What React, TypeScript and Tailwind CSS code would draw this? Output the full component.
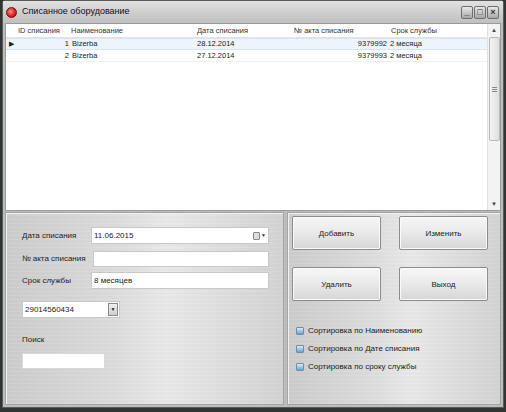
import React from 'react';

const rows = [
  { id: 1, name: 'Bizerba', date: '28.12.2014', act: '9379992', term: '2 месяца' },
  { id: 2, name: 'Bizerba', date: '27.12.2014', act: '9379993', term: '2 месяца' },
];

const metal =
  'bg-[repeating-linear-gradient(0deg,rgba(255,255,255,0.08)_0px,rgba(255,255,255,0.08)_1px,rgba(0,0,0,0.015)_2px,rgba(0,0,0,0)_4px),linear-gradient(90deg,#cbcbcb,#dcdcdc_40%,#e8e8e8_58%,#d2d2d2)]';

function Btn({ label }: { label: string }) {
  return (
    <button className="w-[89px] h-[34px] rounded-[2px] border border-[#8c8c8c] bg-[linear-gradient(180deg,#f7f7f7,#e9e9e9_50%,#d6d6d6)] shadow-[inset_0_0_0_1px_#fafafa] text-[8px] text-[#222] pt-[2px]">
      {label}
    </button>
  );
}

function Check({ label }: { label: string }) {
  return (
    <div className="flex items-center gap-[4px] h-[18px]">
      <span className="w-[8px] h-[8px] rounded-[1px] border border-[#7a8a9a] bg-[linear-gradient(180deg,#d8ecfa,#5fa6d8)]" />
      <span className="text-[8px] text-[#222]">{label}</span>
    </div>
  );
}

export default function App() {
  return (
    <div className="w-[506px] h-[412px] bg-[#2f3530] overflow-hidden font-['Liberation_Sans',sans-serif]">
      <div className="ml-[2px] w-[502px] h-[408px] bg-[#bdbdbd] border border-[#5a5a5a] rounded-t-[4px] flex flex-col">
        {/* title bar */}
        <div className="h-[22px] flex items-center px-[3px] bg-[linear-gradient(180deg,#e2e2e2,#cdcdcd_55%,#c0c0c0)]">
          <span className="w-[11px] h-[11px] rounded-full bg-[radial-gradient(circle_at_40%_40%,#ff8a80,#d32020_60%,#8a0c0c)] border border-[#7a1010]" />
          <span className="ml-[5px] text-[9px] text-[#111]">Списанное оборудование</span>
          <div className="ml-auto flex gap-[1px] mr-[1px]">
            {['_', '□', '×'].map((c) => (
              <span
                key={c}
                className="w-[12px] h-[13px] flex items-center justify-center rounded-[2px] border border-[#6e6e6e] bg-[linear-gradient(180deg,#e8e8e8,#a8a8a8)] text-[9px] leading-none text-[#333] font-bold"
              >
                {c}
              </span>
            ))}
          </div>
        </div>

        {/* grid */}
        <div className="mx-[2px] h-[188px] bg-white border border-[#9a9a9a] flex">
          <div className="flex-1 flex flex-col">
            <div className="h-[14px] flex items-center text-[7.5px] text-[#333] border-b border-[#e4e4e4]">
              <span className="w-[10px]" />
              <span className="w-[53px] pl-[2px]">ID списания</span>
              <span className="w-[126px] pl-[2px]">Наименование</span>
              <span className="w-[97px] pl-[2px]">Дата списания</span>
              <span className="w-[97px] pl-[2px]">№ акта списания</span>
              <span className="w-[97px] pl-[2px]">Срок службы</span>
            </div>
            {rows.map((r, i) => (
              <div
                key={r.id}
                className={`h-[12px] flex items-center text-[7.5px] text-[#222] ${
                  i === 0 ? 'bg-[#eef4fb] border-y border-[#d6e3f2]' : 'border-b border-[#f0f0f0]'
                }`}
              >
                <span className="w-[10px] flex justify-center text-[7px]">{i === 0 ? '▶' : ''}</span>
                <span className="w-[55px] text-right pr-[2px]">{r.id}</span>
                <span className="w-[124px] pl-[1px]">{r.name}</span>
                <span className="w-[97px] pl-[2px]">{r.date}</span>
                <span className="w-[97px] text-right pr-[2px]">{r.act}</span>
                <span className="w-[97px] pl-[1px]">{r.term}</span>
              </div>
            ))}
          </div>
          {/* scrollbar */}
          <div className="w-[13px] flex flex-col items-center bg-[#f3f3f3] border-l border-[#e2e2e2]">
            <span className="h-[13px] text-[6px] text-[#444] leading-[13px]">▲</span>
            <div className="w-[11px] h-[104px] rounded-[2px] border border-[#b8b8b8] bg-[linear-gradient(90deg,#f4f4f4,#dedede)] flex flex-col items-center justify-center gap-[1px]">
              <span className="w-[5px] h-px bg-[#888]" />
              <span className="w-[5px] h-px bg-[#888]" />
              <span className="w-[5px] h-px bg-[#888]" />
            </div>
            <span className="mt-auto h-[12px] text-[6px] text-[#444] leading-[12px]">▼</span>
          </div>
        </div>

        {/* bottom panels */}
        <div className="flex-1 flex mx-[2px] mb-[2px] mt-px gap-[3px]">
          <div className={`w-[279px] border border-[#a4a4a4] shadow-[inset_1px_1px_0_#f2f2f2] ${metal} pl-[16px] pt-[14px] text-[8px] text-[#222]`}>
            <div className="flex items-center h-[17px]">
              <span className="w-[69px]">Дата списания</span>
              <div className="w-[178px] h-[17px] bg-white border border-[#c8c8c8] flex items-center pl-[2px]">
                <span>11.06.2015</span>
                <span className="ml-auto mr-[2px] flex items-center gap-[1px]">
                  <span className="w-[7px] h-[8px] rounded-[1px] border border-[#888] bg-[#ddd]" />
                  <span className="text-[5px] text-[#333]">▼</span>
                </span>
              </div>
            </div>
            <div className="flex items-center h-[17px] mt-[6px]">
              <span className="w-[71px]">№ акта списания</span>
              <div className="w-[176px] h-[16px] bg-white border border-[#c8c8c8]" />
            </div>
            <div className="flex items-center h-[17px] mt-[5px]">
              <span className="w-[69px]">Срок службы</span>
              <div className="w-[178px] h-[17px] bg-white border border-[#c8c8c8] flex items-center pl-[2px]">8 месяцев</div>
            </div>
            <div className="mt-[12px] w-[98px] h-[17px] bg-white border border-[#c8c8c8] flex items-center pl-[2px]">
              <span>29014560434</span>
              <span className="ml-auto w-[10px] h-[13px] mr-[1px] border border-[#888] bg-[linear-gradient(180deg,#f0f0f0,#cfcfcf)] flex items-center justify-center text-[5px]">▼</span>
            </div>
            <div className="mt-[16px]">Поиск</div>
            <div className="mt-[7px] w-[83px] h-[16px] bg-white border border-[#d8d8d8]" />
          </div>
          <div className={`flex-1 border border-[#a4a4a4] shadow-[inset_1px_1px_0_#f2f2f2] ${metal} pl-[4px] pt-[3px]`}>
            <div className="grid grid-cols-[89px_89px] gap-x-[18px] gap-y-[17px]">
              <Btn label="Добавить" />
              <Btn label="Изменить" />
              <Btn label="Удалить" />
              <Btn label="Выход" />
            </div>
            <div className="mt-[21px] pl-[4px]">
              <Check label="Сортировка по Наименованию" />
              <Check label="Сортировка по Дате списания" />
              <Check label="Сортировка по сроку службы" />
            </div>
          </div>
        </div>
      </div>
    </div>
  );
}
